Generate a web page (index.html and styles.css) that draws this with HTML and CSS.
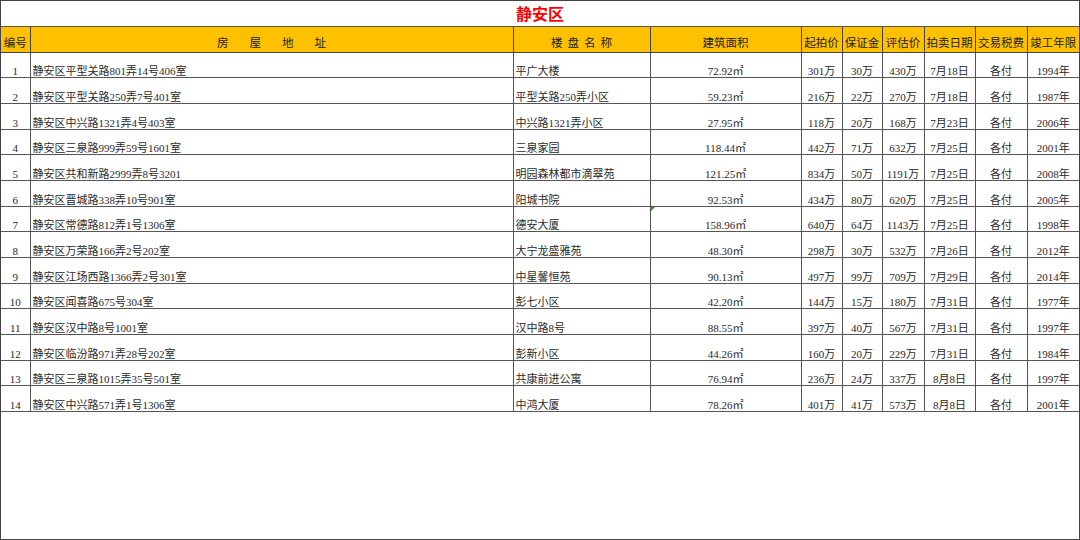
FILE: index.html
```html
<!DOCTYPE html>
<html lang="zh">
<head>
<meta charset="utf-8">
<title>静安区</title>
<link rel="stylesheet" href="styles.css">
</head>
<body>
<div class="sheet">
<table class="grid">
<colgroup>
<col class="c-no"><col class="c-addr"><col class="c-name"><col class="c-area"><col class="c-start"><col class="c-dep"><col class="c-eval"><col class="c-date"><col class="c-tax"><col class="c-year">
</colgroup>
<thead>
<tr class="title-row"><th colspan="10" class="title">静安区</th></tr>
<tr class="head-row">
<th>编号</th>
<th><span class="wide">房屋地址</span></th>
<th><span class="mid">楼盘名称</span></th>
<th>建筑面积</th>
<th>起拍价</th>
<th>保证金</th>
<th>评估价</th>
<th>拍卖日期</th>
<th>交易税费</th>
<th>竣工年限</th>
</tr>
</thead>
<tbody>
<tr><td class="ctr">1</td><td>静安区平型关路801弄14号406室</td><td>平广大楼</td><td class="ctr">72.92㎡</td><td class="ctr">301万</td><td class="ctr">30万</td><td class="ctr">430万</td><td class="ctr">7月18日</td><td class="ctr">各付</td><td class="ctr">1994年</td></tr>
<tr><td class="ctr">2</td><td>静安区平型关路250弄7号401室</td><td>平型关路250弄小区</td><td class="ctr">59.23㎡</td><td class="ctr">216万</td><td class="ctr">22万</td><td class="ctr">270万</td><td class="ctr">7月18日</td><td class="ctr">各付</td><td class="ctr">1987年</td></tr>
<tr><td class="ctr">3</td><td>静安区中兴路1321弄4号403室</td><td>中兴路1321弄小区</td><td class="ctr">27.95㎡</td><td class="ctr">118万</td><td class="ctr">20万</td><td class="ctr">168万</td><td class="ctr">7月23日</td><td class="ctr">各付</td><td class="ctr">2006年</td></tr>
<tr><td class="ctr">4</td><td>静安区三泉路999弄59号1601室</td><td>三泉家园</td><td class="ctr">118.44㎡</td><td class="ctr">442万</td><td class="ctr">71万</td><td class="ctr">632万</td><td class="ctr">7月25日</td><td class="ctr">各付</td><td class="ctr">2001年</td></tr>
<tr><td class="ctr">5</td><td>静安区共和新路2999弄8号3201</td><td>明园森林都市滴翠苑</td><td class="ctr">121.25㎡</td><td class="ctr">834万</td><td class="ctr">50万</td><td class="ctr">1191万</td><td class="ctr">7月25日</td><td class="ctr">各付</td><td class="ctr">2008年</td></tr>
<tr><td class="ctr">6</td><td>静安区晋城路338弄10号901室</td><td>阳城书院</td><td class="ctr">92.53㎡</td><td class="ctr">434万</td><td class="ctr">80万</td><td class="ctr">620万</td><td class="ctr">7月25日</td><td class="ctr">各付</td><td class="ctr">2005年</td></tr>
<tr><td class="ctr">7</td><td>静安区常德路812弄1号1306室</td><td>德安大厦</td><td class="ctr flag">158.96㎡</td><td class="ctr">640万</td><td class="ctr">64万</td><td class="ctr">1143万</td><td class="ctr">7月25日</td><td class="ctr">各付</td><td class="ctr">1998年</td></tr>
<tr><td class="ctr">8</td><td>静安区万荣路166弄2号202室</td><td>大宁龙盛雅苑</td><td class="ctr">48.30㎡</td><td class="ctr">298万</td><td class="ctr">30万</td><td class="ctr">532万</td><td class="ctr">7月26日</td><td class="ctr">各付</td><td class="ctr">2012年</td></tr>
<tr><td class="ctr">9</td><td>静安区江场西路1366弄2号301室</td><td>中星馨恒苑</td><td class="ctr">90.13㎡</td><td class="ctr">497万</td><td class="ctr">99万</td><td class="ctr">709万</td><td class="ctr">7月29日</td><td class="ctr">各付</td><td class="ctr">2014年</td></tr>
<tr><td class="ctr">10</td><td>静安区闻喜路675号304室</td><td>彭七小区</td><td class="ctr">42.20㎡</td><td class="ctr">144万</td><td class="ctr">15万</td><td class="ctr">180万</td><td class="ctr">7月31日</td><td class="ctr">各付</td><td class="ctr">1977年</td></tr>
<tr><td class="ctr">11</td><td>静安区汉中路8号1001室</td><td>汉中路8号</td><td class="ctr">88.55㎡</td><td class="ctr">397万</td><td class="ctr">40万</td><td class="ctr">567万</td><td class="ctr">7月31日</td><td class="ctr">各付</td><td class="ctr">1997年</td></tr>
<tr><td class="ctr">12</td><td>静安区临汾路971弄28号202室</td><td>彭新小区</td><td class="ctr">44.26㎡</td><td class="ctr">160万</td><td class="ctr">20万</td><td class="ctr">229万</td><td class="ctr">7月31日</td><td class="ctr">各付</td><td class="ctr">1984年</td></tr>
<tr><td class="ctr">13</td><td>静安区三泉路1015弄35号501室</td><td>共康前进公寓</td><td class="ctr">76.94㎡</td><td class="ctr">236万</td><td class="ctr">24万</td><td class="ctr">337万</td><td class="ctr">8月8日</td><td class="ctr">各付</td><td class="ctr">1997年</td></tr>
<tr><td class="ctr">14</td><td>静安区中兴路571弄1号1306室</td><td>中鸿大厦</td><td class="ctr">78.26㎡</td><td class="ctr">401万</td><td class="ctr">41万</td><td class="ctr">573万</td><td class="ctr">8月8日</td><td class="ctr">各付</td><td class="ctr">2001年</td></tr>
</tbody>
</table>
</div>
</body>
</html>
```
FILE: styles.css
```css
html, body {
  margin: 0;
  padding: 0;
  background: #ffffff;
}
.sheet {
  width: 1080px;
  height: 540px;
  box-sizing: border-box;
  border: 1px solid #444;
  overflow: hidden;
  font-family: "Liberation Serif", "Noto Sans CJK SC", serif;
  color: #2a2a2a;
}
.grid {
  border-collapse: collapse;
  table-layout: fixed;
  width: 1078px;
}
.c-no { width: 29px; }
.c-addr { width: 483px; }
.c-name { width: 137px; }
.c-area { width: 151px; }
.c-start { width: 41px; }
.c-dep { width: 40px; }
.c-eval { width: 42px; }
.c-date { width: 51px; }
.c-tax { width: 52px; }
.c-year { width: 52px; }

.title-row th {
  height: 25px;
  padding: 0;
  border-bottom: 1px solid #555;
  font-family: "Noto Sans CJK SC", sans-serif;
  font-size: 16px;
  font-weight: bold;
  color: #ff0000;
  line-height: 25px;
  text-align: center;
  vertical-align: middle;
}
.head-row th {
  height: 21.7px;
  padding: 0 0 3px 0;
  background: #ffc000;
  border: 1px solid #444;
  border-top: none;
  font-family: "Noto Sans CJK SC", sans-serif;
  font-size: 11.5px;
  font-weight: normal;
  color: #222;
  line-height: 14px;
  text-align: center;
  vertical-align: bottom;
  white-space: nowrap;
  overflow: hidden;
}
.head-row th:first-child { border-left: none; }
.head-row th:last-child { border-right: none; }
.wide {
  letter-spacing: 21px;
  padding-left: 21px;
}
.mid {
  letter-spacing: 5px;
  padding-left: 5px;
}
tbody td {
  height: 24.66px;
  padding: 0 2px 0 2px;
  border: 1px solid #555;
  font-size: 11px;
  line-height: 12px;
  vertical-align: bottom;
  white-space: nowrap;
  overflow: hidden;
  text-align: left;
}
tbody td:first-child { border-left: none; }
tbody td:last-child { border-right: none; }
tbody td.ctr { text-align: center; padding: 0; }
.flag { position: relative; }
.flag::before {
  content: "";
  position: absolute;
  left: 0;
  top: 0;
  width: 0;
  height: 0;
  border-top: 4px solid #1a9a1a;
  border-right: 4px solid transparent;
}
```
